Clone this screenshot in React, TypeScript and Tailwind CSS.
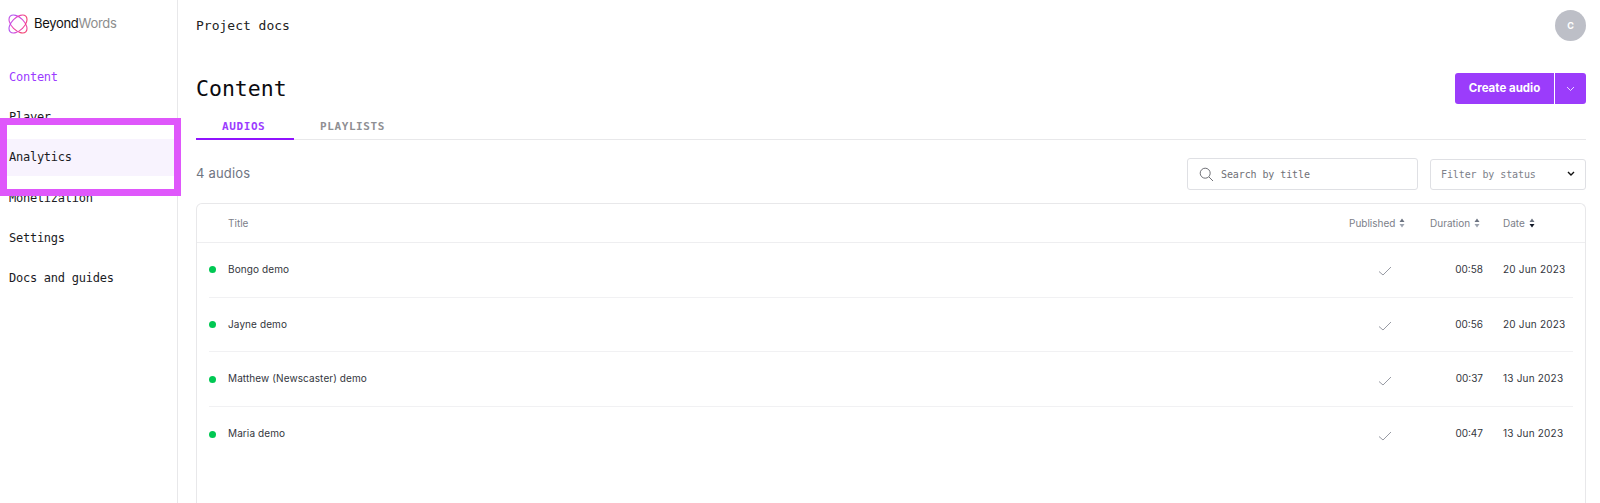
import React from "react";

const mono = "font-['DejaVu_Sans_Mono','Liberation_Mono',monospace]";
const sans = "font-['Inter','Liberation_Sans',sans-serif]";

function Logo() {
  return (
    <svg width="20" height="20" viewBox="0 0 20 20" fill="none">
      <defs>
        <linearGradient id="lg" x1="1" y1="3" x2="19" y2="17" gradientUnits="userSpaceOnUse">
          <stop offset="0" stopColor="#a855f7" />
          <stop offset="0.5" stopColor="#e846c8" />
          <stop offset="1" stopColor="#f43f5e" />
        </linearGradient>
      </defs>
      <ellipse cx="10" cy="10" rx="11" ry="6.3" stroke="url(#lg)" strokeWidth="1.1" transform="rotate(45 10 10)" />
      <ellipse cx="10" cy="10" rx="11" ry="6.3" stroke="url(#lg)" strokeWidth="1.1" transform="rotate(-45 10 10)" />
    </svg>
  );
}

function Sort({ dark }: { dark?: boolean }) {
  return (
    <svg width="6" height="10" viewBox="0 0 6 10" className="ml-[4px]">
      <path d="M3 0.5 L5.5 4 H0.5 Z" fill="#6b7280" />
      <path d="M3 9.5 L5.5 6 H0.5 Z" fill={dark ? "#111827" : "#9ca3af"} />
    </svg>
  );
}

function Check() {
  return (
    <svg width="14" height="10" viewBox="0 0 14 10" fill="none">
      <path d="M1 5.5 L5 9 L13 1" stroke="#8b8f98" strokeWidth="0.9" />
    </svg>
  );
}

const nav = ["Content", "Player", "Analytics", "Monetization", "Settings", "Docs and guides"];
const rows = [
  ["Bongo demo", "00:58", "20 Jun 2023"],
  ["Jayne demo", "00:56", "20 Jun 2023"],
  ["Matthew (Newscaster) demo", "00:37", "13 Jun 2023"],
  ["Maria demo", "00:47", "13 Jun 2023"],
];

export default function App() {
  return (
    <div className={`relative flex h-[503px] w-[1600px] overflow-hidden bg-white ${sans}`}>
      <aside className="w-[178px] shrink-0 border-r border-[#e8e8ea]">
        <div className="flex h-[48px] items-center pl-[8px]">
          <Logo />
          <span className="ml-[6px] text-[13px] tracking-[-0.3px] text-[#111]">
            Beyond<span className="text-[#8d8d8d]">Words</span>
          </span>
        </div>
        <nav className={`mt-[10px] text-[12px] tracking-[-0.25px] ${mono}`}>
          {nav.map((n, i) => (
            <div
              key={n}
              className={`flex h-[37px] mb-[3.4px] items-center pl-[9px] ${
                i === 0 ? "text-[#9b3cff]" : "text-[#1b1b1f]"
              } ${i === 2 ? "bg-[#f8f3fe]" : ""}`}
            >
              {n}
            </div>
          ))}
        </nav>
      </aside>

      <main className="flex min-w-0 flex-1 flex-col pl-[18px] pr-[14px]">
        <header className="flex h-[51px] items-center justify-between">
          <span className={`text-[13px] text-[#222] ${mono}`}>Project docs</span>
          <div className="flex h-[31px] w-[31px] items-center justify-center rounded-full bg-[#bdbfc7] text-[9px] font-bold text-white">
            C
          </div>
        </header>

        <div className="mt-[22px] flex h-[31px] items-center justify-between">
          <h1 className={`pt-[2px] text-[21.5px] font-normal text-[#0b0b0f] ${mono}`}>Content</h1>
          <div className="flex h-[31px]">
            <button className="flex w-[99px] items-center justify-center rounded-l-[3px] bg-[#9b3cfb] text-[11.5px] font-bold text-white">
              Create audio
            </button>
            <button className="ml-[1px] flex w-[31px] items-center justify-center rounded-r-[3px] bg-[#9b3cfb] text-white">
              <svg width="9" height="6" viewBox="0 0 9 6" fill="none">
                <path d="M1 1 L4.5 4.5 L8 1" stroke="#ffffff" strokeWidth="0.8" />
              </svg>
            </button>
          </div>
        </div>

        <div className="mt-[11px] flex h-[25px] border-b border-[#e8e8ea]">
          <div className={`h-[25px] w-[98px] border-b-2 border-[#9013fe] pl-[26px] text-[11px] font-bold leading-[24px] tracking-[0.6px] text-[#9b3cff] ${mono}`}>
            AUDIOS
          </div>
          <div className={`ml-[26px] text-[11px] font-bold leading-[24px] tracking-[0.6px] text-[#8f8f93] ${mono}`}>
            PLAYLISTS
          </div>
        </div>

        <div className="mt-[18px] flex h-[32px] items-center justify-between">
          <span className="text-[13px] tracking-[0.2px] text-[#6f7582]">4 audios</span>
          <div className="flex items-center">
            <div className="flex h-[32px] w-[231px] items-center rounded-[3px] border border-[#dfe0e4] pl-[11px]">
              <svg width="15" height="15" viewBox="0 0 15 15" fill="none">
                <circle cx="6.2" cy="6.2" r="5" stroke="#6f7076" strokeWidth="1" />
                <path d="M10 10 L14 14" stroke="#6f7076" strokeWidth="1" />
              </svg>
              <span className={`ml-[7px] text-[10px] tracking-[-0.1px] text-[#6f7076] ${mono}`}>Search by title</span>
            </div>
            <div className="ml-[12px] flex h-[31px] w-[156px] items-center justify-between rounded-[3px] border border-[#dfe0e4] pl-[10px] pr-[10px]">
              <span className={`text-[10px] tracking-[-0.1px] text-[#7c8089] ${mono}`}>Filter by status</span>
              <svg width="8" height="6" viewBox="0 0 8 6" fill="none">
                <path d="M1 1 L4 4 L7 1" stroke="#111" strokeWidth="1.4" />
              </svg>
            </div>
          </div>
        </div>

        <section className="mt-[13px] flex-1 rounded-t-[6px] border border-b-0 border-[#e8e8ea]">
          <div className="flex h-[39px] items-center border-b border-[#eeeef0] pl-[31px] text-[10px] text-[#7c8089]">
            <span className="flex-1">Title</span>
            <span className="flex w-[81px] items-center">Published<Sort /></span>
            <span className="flex w-[73px] items-center">Duration<Sort /></span>
            <span className="flex w-[82px] items-center">Date<Sort dark /></span>
          </div>
          {rows.map((r) => (
            <div key={r[0]} className="mx-[12px] flex h-[54.7px] items-center border-b border-[#f1f1f3] last:border-b-0 text-[10px] text-[#33363d]">
              <span className="h-[7px] w-[7px] shrink-0 rounded-full bg-[#00c853]" />
              <span className="ml-[12px] flex-1 pb-[1px] tracking-[0.1px]">{r[0]}</span>
              <span className="flex w-[99px] justify-start pl-[13px] pt-[3px]"><Check /></span>
              <span className="flex w-[19px] justify-end whitespace-nowrap pb-[1px]">{r[1]}</span>
              <span className="ml-[20px] w-[70px] pb-[1px] tracking-[0.2px]">{r[2]}</span>
            </div>
          ))}
        </section>
      </main>

      <div className="pointer-events-none absolute left-0 top-[118px] h-[78px] w-[181px] border-[7px] border-[#df57fb]" />
    </div>
  );
}
